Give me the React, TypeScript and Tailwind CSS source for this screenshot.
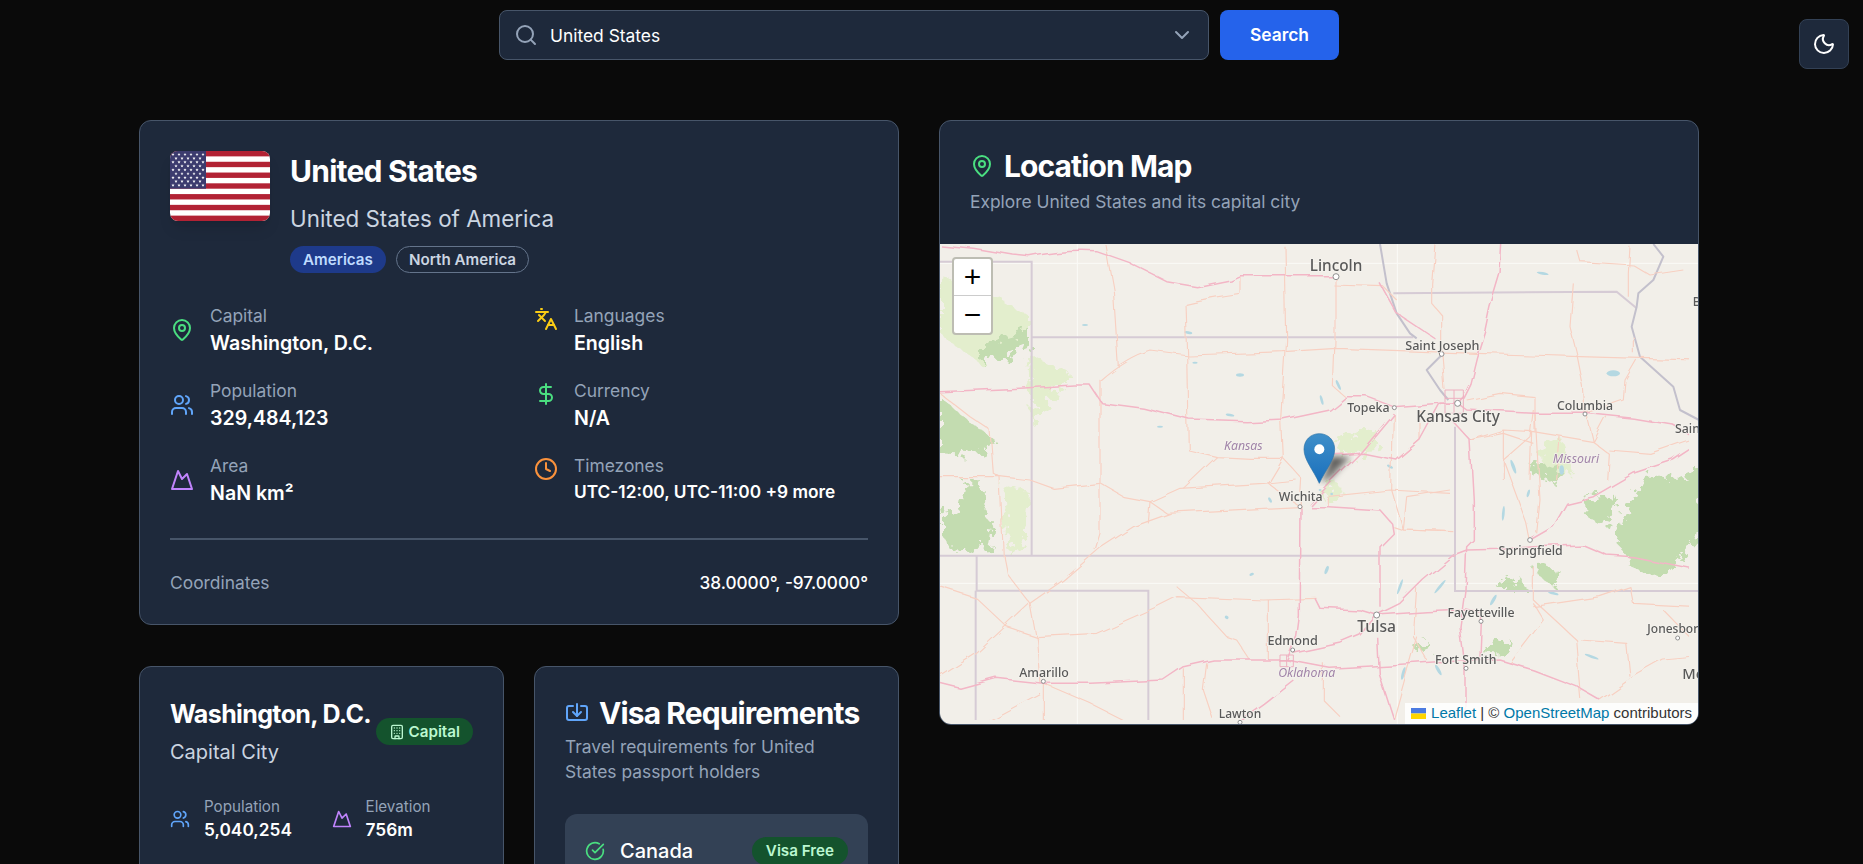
import {
  Building,
  ChevronDown,
  CircleCheckBig,
  Clock,
  DollarSign,
  Import,
  Languages,
  MapPin,
  Moon,
  Mountain,
  Search,
  Users,
} from "lucide-react";
import type { ReactNode } from "react";

const majorRoads = [
  "M30 15 L130 25 L250 45 L300 50 Q400 30 500 35 L600 70 L710 125 L800 140 L900 120 L930 107 L1215 107",
  "M30 455 L270 445 L430 435 L480 435 L515 488 L640 505 L780 540 L950 545 L1060 540 L1200 510 L1250 470 L1310 470 L1390 500 L1530 490 L1583 490 L1610 510 L1810 520 L1965 520 L2110 535 L2230 555 L2307 600",
  "M1140 795 L1200 730 L1290 640 L1390 520",
  "M1110 800 L1108 1080 L1108 1130 L1100 1190 L1070 1260",
  "M1140 800 L1195 800 L1350 810 L1385 850 L1390 880 L1350 920 L1350 1100",
  "M1155 1075 L1170 1105 L1290 1110 L1340 1125 L1410 1090 L1480 1020 L1570 945 L1610 930 L1710 928 L1810 920 L1960 915 L2030 945 L2110 950 L2307 990",
  "M1090 1240 L1230 1210 L1290 1185 L1340 1125 L1490 1115 L1610 1110 L1655 1120 L1650 1250",
  "M30 1330 L90 1345 L200 1315 L340 1330 L480 1330 L700 1320 L760 1280 L850 1260 L1070 1260 L1200 1285 L1380 1275 L1520 1265 L1710 1260 L1810 1290 L1940 1340 L2010 1380",
  "M1090 1320 L1000 1390 L930 1440",
  "M1715 12 L1710 100 L1680 200 L1665 270 L1640 350 L1620 430 L1600 470 L1583 490",
  "M1565 540 L1620 600 L1630 780 L1630 900 L1610 920 L1605 1050 L1590 1160 L1605 1280 L1605 1440",
  "M1800 900 L1870 860 L1910 790 L1990 770 L2110 700 L2230 660 L2307 610",
  "M1583 490 L1530 490 L1470 600 L1400 660 L1300 640 L1190 645",
  "M1340 1190 L1345 1300 L1390 1440",
  "M1350 130 L1400 220 L1520 300",
];

const minorRoads = [
  "M525 12 L550 150 L565 380",
  "M765 190 L770 340 L775 630 L860 650 L960 655 L1060 655",
  "M765 190 Q850 170 930 160 L930 105",
  "M1065 20 L1070 300 L1055 540 L1060 655",
  "M1215 110 L1215 300 L1210 440 L1245 470",
  "M510 420 L510 880 L495 930",
  "M510 420 Q590 350 660 330 L775 345 L1060 335 L1220 325 L1640 340 L1800 345 L1950 350 L2130 355 L2307 360",
  "M30 710 L210 710 L300 720 L370 745 L510 730 L580 770 L660 785 L750 745 L1000 730 L1100 720",
  "M180 570 L190 700 L210 710 L220 950 L230 1000 L300 1090 L320 1200 L330 1330",
  "M30 460 L120 530 L180 570",
  "M660 785 L655 850 M660 785 L710 820 L1000 805 L1110 800",
  "M860 650 L760 745 M1060 655 L1015 730 L1110 800 M1060 655 L1115 715 L1110 800",
  "M30 1040 L140 1075 L230 1160 L320 1190 L500 1180 L590 1140 L680 1100 L740 1070 L1000 1080 L1160 1075",
  "M30 1310 L140 1240 L300 1090 L400 1020 L510 925 L610 860 L720 820",
  "M740 1040 L800 1090 L890 1190 L920 1200 L960 1260",
  "M760 1285 L760 1440 M830 1270 L820 1350 L850 1440 M1015 1080 L1015 1260",
  "M340 1330 L340 1440 M340 1330 L480 1390 L580 1440 M180 1440 L330 1360",
  "M1180 1270 L1180 1380 L1230 1430 M1460 1190 L1390 1440",
  "M1390 520 L1385 750 L1420 870 L1560 875 M1190 770 L1380 750 L1560 760 M1195 800 L1195 770",
  "M1515 12 L1505 130 L1505 190 L1535 225 L1535 330 L1545 450",
  "M1930 130 L1920 260 L1940 340 L1960 440 L1965 520",
  "M1940 30 L1950 65 L2110 75 L2160 105 L2260 90",
  "M2100 20 L2095 100 L2095 170 M2110 290 L2110 340",
  "M1210 135 L1360 140 L1400 180",
  "M2120 360 L2085 420 L2080 480 L1965 520",
  "M2030 530 L1990 605 L1970 520 M1990 605 L1810 575 L1720 570 L1620 600",
  "M1815 470 L1815 575 M1610 480 L1710 460 L1815 470",
  "M1720 570 L1720 720 M1805 575 L1800 720 M1890 590 L1880 720",
  "M1990 605 L2035 640 L2030 720 M2275 600 L2160 640 L2035 630",
  "M1810 510 L1800 590 L1720 660 L1790 850 L1800 900 M1815 520 L1830 780 L1820 880",
  "M1810 980 L1810 1080 L1940 1200 L1950 1320 L1955 1380",
  "M1810 1100 L2010 1070 L2100 1040 L2110 1090 L2307 1100",
  "M1950 1200 L2090 1210 L2100 1310 M2200 1110 L2307 1220",
  "M2010 1380 L2110 1310 L2200 1260 L2307 1250",
  "M1390 860 L1420 870 L1570 875 M1430 770 L1420 870 M1430 770 L1560 750",
  "M1460 1045 L1450 1190 L1490 1260 M1400 660 L1470 600 L1470 510",
  "M1620 600 L1720 580 L1810 610",
  "M1740 1270 L1840 1140 L1810 1090",
];

const stateBorders = [
  "M30 65 L305 65 L305 945",
  "M305 292 L1450 292",
  "M30 947 L1575 947",
  "M1575 560 L1575 1053 L2307 1053",
  "M140 947 L140 1052 L655 1052 L655 1440",
  "M137 1052 L137 1440",
  "M1390 160 L2060 155 L2120 205",
];

const rivers = [
  "M1350 12 L1370 130 L1400 220 L1440 280 L1460 295",
  "M1535 345 L1490 390 L1530 450 L1555 480",
  "M2170 12 L2200 50 L2170 120 L2125 160 L2120 200 L2105 260 L2130 350 L2230 440 L2250 510 L2307 540",
];

const lightForest = [
  "M30 110 L130 130 L300 230 L300 300 L150 370 L30 280Z",
  "M300 350 L420 400 L340 520 L310 560Z",
  "M220 730 L300 760 L290 900 L230 940Z",
  "M1215 600 L1330 560 L1340 640 L1230 650Z",
  "M1830 620 L1890 590 L1930 700 L1840 700Z",
  "M1180 770 L1215 720 L1240 760 L1190 790Z",
];

const darkForest = [
  "M150 315 L230 290 L300 270 L300 320 L230 350 L150 365Z",
  "M30 470 L100 530 L180 590 L205 610 L120 645 L30 640Z",
  "M110 730 L160 730 L165 830 L190 860 L180 920 L60 930 L30 880 L30 820 L100 800Z",
  "M2150 710 L2250 710 L2330 680 L2307 900 L2200 1020 L2100 980 L2080 930 L2050 900 L2100 790Z",
  "M1960 780 L2060 770 L2030 860 L1960 820Z",
  "M1810 960 L1900 1000 L1870 1040 L1820 1000Z",
  "M1660 1220 L1740 1195 L1730 1245 L1660 1240Z",
  "M1700 1040 L1760 1000 L1790 1050 L1710 1050Z",
  "M1810 660 L1900 690 L1870 730 L1800 700Z",
  "M1450 1215 L1490 1200 L1495 1225 L1460 1240Z",
];

const water: [number, number, number, number, number][] = [
  [465, 255, 9, 3, 0], [775, 278, 12, 4, 10], [930, 405, 12, 5, 0], [795, 368, 8, 3, 0],
  [900, 525, 13, 4, 10], [690, 560, 9, 3, 0], [1175, 480, 4, 15, -15], [1225, 435, 4, 16, -25],
  [1380, 680, 10, 4, 30], [1190, 990, 5, 13, 20], [965, 1003, 7, 4, -20], [890, 1132, 6, 5, 30],
  [1410, 1040, 4, 24, 20], [1020, 780, 4, 9, -30], [1720, 820, 4, 22, 5], [1530, 1040, 4, 26, 40],
  [1690, 1080, 5, 18, 30], [1750, 680, 5, 22, -20], [1895, 690, 7, 14, 0], [1795, 760, 4, 12, 15],
  [1870, 1060, 16, 4, 15], [1985, 1250, 22, 4, 20], [1525, 1290, 5, 18, -30], [1420, 1300, 5, 20, 15],
  [1838, 100, 18, 4, 10], [2050, 400, 20, 9, 0], [1170, 750, 4, 3, 0], [1205, 762, 4, 4, 0],
];

const cities: [number, number, number][] = [
  [1218, 110, 9], [1535, 342, 7], [1393, 503, 6], [1583, 490, 9], [1965, 522, 6], [1110, 800, 6],
  [1800, 900, 7], [1340, 1125, 9], [1088, 1230, 6], [340, 1324, 6], [1653, 1144, 6], [1608, 1285, 6],
  [2243, 1194, 6], [930, 1447, 6],
];

// x, y, text, font size, anchor
const labels: [number, number, string, number, "middle" | "start"][] = [
  [1218, 94, "Lincoln", 46, "middle"],
  [1537, 329, "Saint Joseph", 38, "middle"],
  [1315, 516, "Topeka", 37, "middle"],
  [1584, 546, "Kansas City", 46, "middle"],
  [1965, 509, "Columbia", 37, "middle"],
  [1112, 782, "Wichita", 37, "middle"],
  [1802, 945, "Springfield", 37, "middle"],
  [1340, 1176, "Tulsa", 47, "middle"],
  [1653, 1130, "Fayetteville", 37, "middle"],
  [1607, 1271, "Fort Smith", 37, "middle"],
  [1088, 1215, "Edmond", 38, "middle"],
  [342, 1310, "Amarillo", 37, "middle"],
  [930, 1434, "Lawton", 36, "middle"],
  [2152, 1178, "Jonesbor", 36, "start"],
  [2235, 579, "Sain", 37, "start"],
  [2257, 1318, "Me", 44, "start"],
  [2288, 197, "B", 36, "start"],
];

const regions: [number, number, string][] = [
  [940, 630, "Kansas"],
  [1130, 1312, "Oklahoma"],
  [1938, 670, "Missouri"],
];

function MapTiles() {
  return (
    <svg viewBox="30 12 2277 1440" className="block h-[480px] w-[759px] blur-[0.5px]">
      <defs>
        <linearGradient id="pin" x1="0" y1="0" x2="0" y2="1">
          <stop offset="0" stopColor="#3f8fc9" />
          <stop offset="1" stopColor="#1a6fbc" />
        </linearGradient>
        <linearGradient id="pinShade" x1="0" y1="0" x2="1" y2="1">
          <stop offset="0" stopColor="#000" stopOpacity="0.95" />
          <stop offset="1" stopColor="#000" stopOpacity="0" />
        </linearGradient>
        <filter id="soft">
          <feGaussianBlur stdDeviation="9" />
        </filter>
        <filter id="forest" x="-10%" y="-10%" width="120%" height="120%">
          <feTurbulence type="fractalNoise" baseFrequency="0.035" numOctaves="3" seed="4" />
          <feDisplacementMap in="SourceGraphic" scale="70" />
          <feGaussianBlur stdDeviation="2" />
        </filter>
        <filter id="wobble" x="0" y="0" width="100%" height="100%" filterUnits="userSpaceOnUse">
          <feTurbulence type="fractalNoise" baseFrequency="0.012" numOctaves="2" seed="9" />
          <feDisplacementMap in="SourceGraphic" scale="22" />
        </filter>
      </defs>
      <rect x="30" y="12" width="2277" height="1440" fill="#f2efe9" />
      <path d="M442 12V1452M1402 12V1452M30 70H2307M30 1030H2307" stroke="#fbfaf7" strokeWidth="3" />
      <g filter="url(#forest)">
        {lightForest.map((d) => (
          <path key={d} d={d} fill="#e3eecd" />
        ))}
        {darkForest.map((d) => (
          <path key={d} d={d} fill="#c3dcb0" />
        ))}
      </g>
      {water.map(([x, y, rx, ry, r]) => (
        <ellipse key={`${x}-${y}`} cx={x} cy={y} rx={rx} ry={ry} fill="#b4d8e2" transform={`rotate(${r} ${x} ${y})`} />
      ))}
      <g fill="none" stroke="#d6cbd5" strokeWidth="6">
        {stateBorders.map((d) => (
          <path key={d} d={d} />
        ))}
      </g>
      <g fill="none" stroke="#c3c0cc" strokeWidth="6" strokeLinejoin="round">
        {rivers.map((d) => (
          <path key={d} d={d} />
        ))}
      </g>
      <g fill="none" stroke="#f8d0c2" strokeWidth="3.5" strokeLinejoin="round" filter="url(#wobble)">
        {minorRoads.map((d) => (
          <path key={d} d={d} />
        ))}
      </g>
      <g fill="none" stroke="#f3b6c6" strokeWidth="4.5" strokeLinejoin="round" filter="url(#wobble)">
        {majorRoads.map((d) => (
          <path key={d} d={d} />
        ))}
      </g>
      <g fill="none" stroke="#eeb0c0" strokeWidth="3">
        <path d="M1050 1245H1090V1280H1050ZM1070 1245V1280M1050 1262H1090" />
        <path d="M1545 450H1600V520H1545ZM1545 475H1600M1572 450V520" />
      </g>
      {cities.map(([x, y, r]) => (
        <circle key={`${x}-${y}`} cx={x} cy={y} r={r} fill="#fff" stroke="#8f8f8f" strokeWidth="3" />
      ))}
      {labels.map(([x, y, text, size, anchor]) => (
        <text
          key={text}
          x={x}
          y={y}
          fontSize={size}
          textAnchor={anchor}
          fontFamily="'Noto Sans', 'Open Sans', sans-serif"
          fontWeight="500"
          fill="#595959"
          stroke="#f5f3ee"
          strokeWidth="5"
          paintOrder="stroke"
        >
          {text}
        </text>
      ))}
      {regions.map(([x, y, text]) => (
        <text
          key={text}
          x={x}
          y={y}
          fontSize="37"
          textAnchor="middle"
          fontStyle="italic"
          fontFamily="'Noto Sans', 'Open Sans', sans-serif"
          fill="#a184a8"
          stroke="#f5f3ee"
          strokeWidth="4"
          paintOrder="stroke"
        >
          {text}
        </text>
      ))}
      <path d="M1172 728 L1205 650 L1262 650 L1205 715Z" fill="url(#pinShade)" filter="url(#soft)" />
      <path
        d="M1168 730 C1150 690 1122 660 1122 628 C1122 600 1142 581 1168 581 C1194 581 1214 600 1214 628 C1214 660 1186 690 1168 730Z"
        fill="url(#pin)"
        stroke="#2a73a8"
        strokeWidth="2"
      />
      <circle cx="1168" cy="628" r="15" fill="#fff" />
    </svg>
  );
}

function UsFlag() {
  const rows = [0, 1, 2, 3, 4, 5, 6, 7, 8];
  return (
    <svg viewBox="0 0 100 70" className="h-[70px] w-[100px] shrink-0 rounded-lg shadow-lg">
      <rect width="100" height="70" fill="#fff" />
      {[0, 2, 4, 6, 8, 10, 12].map((i) => (
        <rect key={i} y={(i * 70) / 13} width="100" height={70 / 13} fill="#b22234" />
      ))}
      <rect width="36" height="37.7" fill="#3c3b6e" />
      {rows.map((r) =>
        (r % 2 === 0 ? [3, 9, 15, 21, 27, 33] : [6, 12, 18, 24, 30]).map((x) => (
          <path
            key={`${r}-${x}`}
            transform={`translate(${x} ${3.4 + r * 3.85})`}
            d="M0 -1.6 L.45 -.5 L1.6 -.5 L.7 .2 L1 1.4 L0 .7 L-1 1.4 L-.7 .2 L-1.6 -.5 L-.45 -.5Z"
            fill="#fff"
          />
        )),
      )}
    </svg>
  );
}

function Fact({
  icon,
  label,
  value,
  small,
  top,
}: {
  icon: ReactNode;
  label: string;
  value: string;
  small?: boolean;
  top?: boolean;
}) {
  return (
    <div className={`flex gap-4 ${top ? "items-start" : "items-center"}`}>
      <div className={top ? "mt-1" : ""}>{icon}</div>
      <div>
        <p className="text-[17.4px] leading-[26px] text-[#94a3b8]">{label}</p>
        <p
          className={
            small
              ? "text-[17.3px] leading-[26px] font-semibold text-white"
              : "text-[19.6px] leading-7 font-semibold text-white"
          }
        >
          {value}
        </p>
      </div>
    </div>
  );
}

function SmallStat({ icon, label, value }: { icon: ReactNode; label: string; value: string }) {
  return (
    <div className="flex items-center gap-[14px]">
      {icon}
      <div>
        <p className="text-[15.2px] leading-[22px] text-[#94a3b8]">{label}</p>
        <p className="text-[17.3px] leading-6 font-semibold text-white">{value}</p>
      </div>
    </div>
  );
}

export default function App() {
  return (
    <div className="relative h-screen overflow-hidden bg-[#0a0a0a] pr-[25px] font-['Inter',sans-serif] text-white">
      {/* theme toggle */}
      <button className="absolute top-[19px] right-[14px] flex h-[50px] w-[50px] items-center justify-center rounded-lg border border-[#334155] bg-[#1e293b]">
        <Moon size={24} className="text-white" />
      </button>

      {/* search */}
      <div className="flex justify-center gap-[11px] pt-[10px]">
        <div className="flex h-[50px] w-[710px] items-center gap-3 rounded-lg border border-[#475569] bg-[#1e293b] pr-[14px] pl-[14px]">
          <Search size={24} className="text-[#94a3b8]" />
          <span className="flex-1 pt-[2px] text-[17.4px] text-white">United States</span>
          <ChevronDown size={24} className="text-[#94a3b8]" />
        </div>
        <button className="h-[50px] w-[119px] rounded-lg bg-[#2563eb] pt-px text-[17.4px] font-semibold text-white">
          Search
        </button>
      </div>

      <div className="mx-auto mt-[60px] grid w-[1560px] grid-cols-2 items-start gap-10">
        {/* left column */}
        <div className="flex flex-col gap-[41px]">
          <div className="rounded-xl border border-[#475569] bg-[#1e293b] px-[30px] pt-[30px] pb-[28px]">
            <div className="flex gap-5">
              <UsFlag />
              <div>
                <h1 className="mt-[2px] text-3xl font-bold tracking-tight text-white">United States</h1>
                <p className="mt-[15px] text-[22.4px] leading-[30px] text-[#cbd5e1]">United States of America</p>
                <div className="mt-[12px] flex gap-[10px]">
                  <span className="rounded-full bg-[#1e3a8a] px-[13px] py-[3px] text-[15.2px] leading-[21px] font-semibold text-[#bfdbfe]">
                    Americas
                  </span>
                  <span className="rounded-full border border-[#64748b] px-3 py-[2px] text-[15.2px] leading-[21px] font-semibold text-[#cbd5e1]">
                    North America
                  </span>
                </div>
              </div>
            </div>

            <div className="mt-[30px] grid grid-cols-2 gap-x-[30px] gap-y-[21px]">
              <Fact icon={<MapPin size={24} className="text-[#4ade80]" />} label="Capital" value="Washington, D.C." />
              <Fact icon={<Languages size={24} className="text-[#facc15]" />} label="Languages" value="English" top />
              <Fact icon={<Users size={24} className="text-[#60a5fa]" />} label="Population" value="329,484,123" />
              <Fact icon={<DollarSign size={24} className="text-[#4ade80]" />} label="Currency" value="N/A" top />
              <Fact icon={<Mountain size={24} className="text-[#c084fc]" />} label="Area" value="NaN km²" />
              <Fact
                icon={<Clock size={24} className="text-[#fb923c]" />}
                label="Timezones"
                value="UTC-12:00, UTC-11:00 +9 more"
                small
                top
              />
            </div>

            <div className="mt-[31px] flex items-center justify-between border-t-2 border-[#475569] pt-[30px]">
              <span className="text-[17.4px] leading-[26px] text-[#94a3b8]">Coordinates</span>
              <span className="text-[17.2px] leading-[26px] font-medium text-white">38.0000°, -97.0000°</span>
            </div>
          </div>

          <div className="grid grid-cols-2 gap-[30px]">
            <div className="rounded-xl border border-[#475569] bg-[#1e293b] p-[30px]">
              <div className="flex items-center justify-between">
                <div className="mt-px">
                  <h2 className="text-[25px] leading-8 font-bold tracking-tight whitespace-nowrap text-white">
                    Washington, D.C.
                  </h2>
                  <p className="mt-2 text-[20px] leading-7 text-[#cbd5e1]">Capital City</p>
                </div>
                <span className="flex items-center gap-1 rounded-full bg-[#14532d] px-[13px] py-[3px] text-[15.2px] leading-[21px] font-semibold text-[#bbf7d0]">
                  <Building size={16} />
                  Capital
                </span>
              </div>
              <div className="mt-[30px] grid grid-cols-2 gap-5">
                <SmallStat icon={<Users size={20} className="text-[#60a5fa]" />} label="Population" value="5,040,254" />
                <SmallStat icon={<Mountain size={20} className="text-[#c084fc]" />} label="Elevation" value="756m" />
              </div>
            </div>

            <div className="rounded-xl border border-[#475569] bg-[#1e293b] p-[30px]">
              <h2 className="-mt-[2px] flex items-center gap-[10px] text-3xl font-bold tracking-[-0.03em] whitespace-nowrap text-white">
                <Import size={24} className="text-[#60a5fa]" />
                Visa Requirements
              </h2>
              <p className="mt-[3px] text-[17.4px] leading-[25px] text-[#94a3b8]">
                Travel requirements for United States passport holders
              </p>
              <div className="mt-[30px] flex items-center justify-between rounded-xl bg-[#334155] px-5 py-[22px]">
                <div className="flex items-center gap-[15px]">
                  <CircleCheckBig size={20} className="text-[#4ade80]" />
                  <span className="text-[20px] font-medium text-white">Canada</span>
                </div>
                <span className="rounded-full bg-[#14532d] px-[14px] py-1 text-[15.2px] leading-5 font-semibold text-[#bbf7d0]">
                  Visa Free
                </span>
              </div>
            </div>
          </div>
        </div>

        {/* map card */}
        <div className="overflow-hidden rounded-xl border border-[#475569] bg-[#1e293b]">
          <div className="h-[123px] px-[30px] pt-[27px]">
            <h2 className="flex items-center gap-[10px] text-3xl font-bold tracking-[-0.03em] text-white">
              <MapPin size={24} className="text-[#4ade80]" />
              Location Map
            </h2>
            <p className="mt-[5px] text-[17.4px] leading-[26px] text-[#94a3b8]">
              Explore United States and its capital city
            </p>
          </div>
          <div className="relative h-[480px] overflow-hidden">
            <MapTiles />
            <div className="absolute top-[13px] left-[12px] w-[41px] overflow-hidden rounded border-2 border-[#bdbdb3] bg-white font-['Liberation_Sans',sans-serif] text-black">
              <div className="flex h-[37px] items-center justify-center border-b border-[#ccc] text-[30px] leading-none">+</div>
              <div className="flex h-[37px] items-center justify-center text-[30px] leading-none">−</div>
            </div>
            <div className="absolute right-0 bottom-0 flex h-[21px] items-center gap-[5px] bg-white/85 pr-[6px] pl-[6px] font-['Liberation_Sans',sans-serif] text-[15px] text-[#333]">
              <svg viewBox="0 0 15 11" className="h-[11px] w-[15px]">
                <rect width="15" height="5.5" fill="#4c7be1" />
                <rect y="5.5" width="15" height="5.5" fill="#ffd500" />
              </svg>
              <span>
                <span className="text-[#0078a8]">Leaflet</span> | © <span className="text-[#0078a8]">OpenStreetMap</span> contributors
              </span>
            </div>
          </div>
        </div>
      </div>
    </div>
  );
}
